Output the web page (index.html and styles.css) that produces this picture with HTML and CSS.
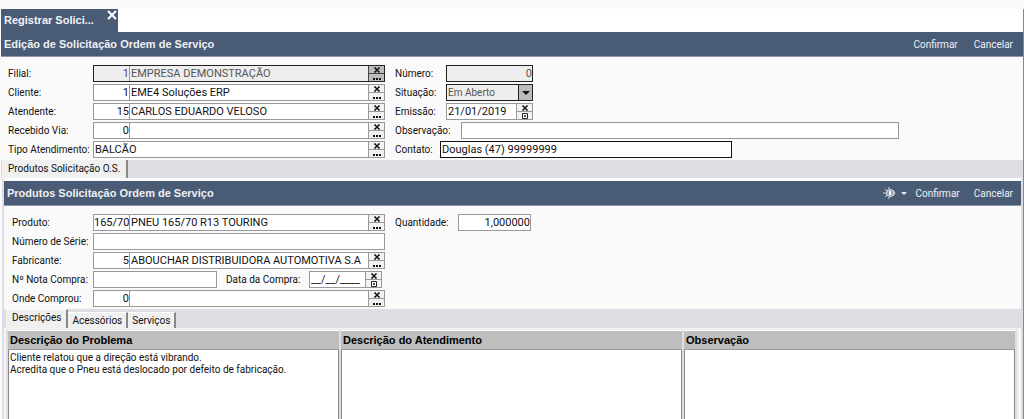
FILE: index.html
```html
<!DOCTYPE html>
<html lang="pt-BR">
<head>
<meta charset="utf-8">
<title>Registrar Solicitação</title>
<link rel="stylesheet" href="styles.css">
</head>
<body>
<svg class="defs" aria-hidden="true">
	<symbol id="x" viewBox="0 0 8 6"><path d="M1 1h2M5 1h2M1 5h2M5 5h2" stroke="#111" stroke-width="1" fill="none"/><path d="M2 1l4 4M6 1l-4 4" stroke="#111" stroke-width="1.500" fill="none"/></symbol>
	<symbol id="dots" viewBox="0 0 8 6"><path d="M0 3h2v2H0zM3 3h2v2H3zM6 3h2v2H6z" fill="#111"/></symbol>
	<symbol id="cal" viewBox="0 0 8 6"><path d="M1.500 .5h5v5h-5z" stroke="#222" stroke-width="1" fill="#fff"/><path d="M3 2l2 2M5 2l-2 2" stroke="#222" stroke-width=".8" fill="none"/></symbol>
	<symbol id="down" viewBox="0 0 8 4"><path d="M0 0h8L4 4z" fill="currentColor"/></symbol>
</svg>
<div id="window">
	<div class="pages">
		<div class="page"><strong>Registrar Solici...</strong>
			<button class="close" aria-label="Fechar"><svg width="10" height="10" viewBox="0 0 10 10"><path d="M1 1l8 8M9 1l-8 8" stroke="#fff" stroke-width="2"/></svg></button>
		</div>
	</div>
	<div class="bar">
		<h1>Edição de Solicitação Ordem de Serviço</h1>
		<div class="actions"><button>Confirmar</button><button>Cancelar</button></div>
	</div>
	<form class="form">
		<div class="left">
			<div class="row"><label for="filial">Filial:</label>
				<div class="field off"><input class="code" id="filial" value="1" disabled><input class="name" aria-label="Nome da filial" value="EMPRESA DEMONSTRAÇÃO" disabled>
				<span class="btns"><button type="button" aria-label="Limpar"><svg><use href="#x"/></svg></button><button type="button" aria-label="Buscar"><svg><use href="#dots"/></svg></button></span></div></div>
			<div class="row"><label for="cliente">Cliente:</label>
				<div class="field"><input class="code" id="cliente" value="1"><input class="name" aria-label="Nome do cliente" value="EME4 Soluções ERP">
				<span class="btns"><button type="button" aria-label="Limpar"><svg><use href="#x"/></svg></button><button type="button" aria-label="Buscar"><svg><use href="#dots"/></svg></button></span></div></div>
			<div class="row"><label for="atendente">Atendente:</label>
				<div class="field"><input class="code" id="atendente" value="15"><input class="name" aria-label="Nome do atendente" value="CARLOS EDUARDO VELOSO">
				<span class="btns"><button type="button" aria-label="Limpar"><svg><use href="#x"/></svg></button><button type="button" aria-label="Buscar"><svg><use href="#dots"/></svg></button></span></div></div>
			<div class="row"><label for="via">Recebido Via:</label>
				<div class="field"><input class="code" id="via" value="0"><input class="name" aria-label="Nome da via">
				<span class="btns"><button type="button" aria-label="Limpar"><svg><use href="#x"/></svg></button><button type="button" aria-label="Buscar"><svg><use href="#dots"/></svg></button></span></div></div>
			<div class="row"><label for="tipo">Tipo Atendimento:</label>
				<div class="field"><input class="name" id="tipo" value="BALCÃO">
				<span class="btns"><button type="button" aria-label="Limpar"><svg><use href="#x"/></svg></button><button type="button" aria-label="Buscar"><svg><use href="#dots"/></svg></button></span></div></div>
		</div>
		<div class="right">
			<div class="row"><label for="numero">Número:</label><div class="field small off"><input class="num" id="numero" value="0" disabled></div></div>
			<div class="row"><label for="situacao">Situação:</label><div class="field small off combo"><select id="situacao"><option>Em Aberto</option></select><span class="arrow"><svg><use href="#down"/></svg></span></div></div>
			<div class="row"><label for="emissao">Emissão:</label><div class="field small"><input class="name" id="emissao" value="21/01/2019">
				<span class="btns"><button type="button" aria-label="Limpar"><svg><use href="#x"/></svg></button><button type="button" aria-label="Calendário"><svg><use href="#cal"/></svg></button></span></div></div>
			<div class="row"><label class="long" for="obs">Observação:</label><div class="field wide"><input class="name" id="obs"></div></div>
			<div class="row"><label class="short" for="contato">Contato:</label><div class="field focus"><input class="name" id="contato" value="Douglas (47) 99999999"></div></div>
		</div>
	</form>
	<div class="tabs main"><a href="#produtos" class="tab on">Produtos Solicitação O.S.</a></div>
	<div id="produtos">
		<div class="bar">
			<h2>Produtos Solicitação Ordem de Serviço</h2>
			<div class="actions">
				<button class="gear" aria-label="Opções"><svg class="sun" viewBox="0 0 14 12"><path d="M1 6h3M3 2l2 2M3 10l2-2M7 0v2M7 10v2" stroke="#d5dae2" stroke-width="1" fill="none"/><circle cx="8" cy="6" r="3.500" fill="#8d99ab" stroke="#e3e6eb"/><path d="M7 4h2v4H7z" fill="#fff"/><path d="M11 3l2 3-2 3" stroke="#d5dae2" fill="none"/></svg><svg class="caret"><use href="#down"/></svg></button><button>Confirmar</button><button>Cancelar</button>
			</div>
		</div>
		<form class="form">
			<div class="left">
				<div class="row"><label for="produto">Produto:</label>
					<div class="field"><input class="code" id="produto" value="165/70"><input class="name" aria-label="Nome do produto" value="PNEU 165/70 R13 TOURING">
					<span class="btns"><button type="button" aria-label="Limpar"><svg><use href="#x"/></svg></button><button type="button" aria-label="Buscar"><svg><use href="#dots"/></svg></button></span></div></div>
				<div class="row"><label for="serie">Número de Série:</label><div class="field"><input class="name" id="serie"></div></div>
				<div class="row"><label for="fabricante">Fabricante:</label>
					<div class="field"><input class="code" id="fabricante" value="5"><input class="name" aria-label="Nome do fabricante" value="ABOUCHAR DISTRIBUIDORA AUTOMOTIVA S.A">
					<span class="btns"><button type="button" aria-label="Limpar"><svg><use href="#x"/></svg></button><button type="button" aria-label="Buscar"><svg><use href="#dots"/></svg></button></span></div></div>
				<div class="row"><label for="nota">Nº Nota Compra:</label><div class="field nota"><input class="name" id="nota"></div>
					<label class="data" for="data">Data da Compra:</label>
					<div class="field date"><input class="name" id="data" value="__/__/____">
					<span class="btns"><button type="button" aria-label="Limpar"><svg><use href="#x"/></svg></button><button type="button" aria-label="Calendário"><svg><use href="#cal"/></svg></button></span></div></div>
				<div class="row"><label for="onde">Onde Comprou:</label>
					<div class="field"><input class="code" id="onde" value="0"><input class="name" aria-label="Nome do local">
					<span class="btns"><button type="button" aria-label="Limpar"><svg><use href="#x"/></svg></button><button type="button" aria-label="Buscar"><svg><use href="#dots"/></svg></button></span></div></div>
			</div>
			<div class="right">
				<div class="row"><label class="mid" for="qtd">Quantidade:</label><div class="field qtd"><input class="num" id="qtd" value="1,000000"></div></div>
			</div>
		</form>
		<div class="tabs sub"><a href="#descricoes" class="tab on">Descrições</a><a href="#acessorios" class="tab">Acessórios</a><a href="#servicos" class="tab">Serviços</a></div>
		<div id="descricoes">
			<table>
				<tr><th>Descrição do Problema</th><th class="center">Descrição do Atendimento</th><th>Observação</th></tr>
				<tr><td>Cliente relatou que a direção está vibrando.<br>Acredita que o Pneu está deslocado por defeito de fabricação.</td><td></td><td></td></tr>
			</table>
		</div>
	</div>
</div>
</body>
</html>
```
FILE: styles.css
```css
*{
	margin:0;
	padding:0;
	box-sizing:border-box;
}
html,body{
	height:100%;
}
body{
	font:10px/13px Roboto,"Liberation Sans",sans-serif;
	color:#111;
	background:#fafafa;
	overflow:hidden;
	padding-top:9px;
}
button,input,select{
	font:inherit;
	color:inherit;
	border:0;
	background:none;
	border-radius:0;
	outline:0;
}
a{
	color:inherit;
	text-decoration:none;
}
.defs{
	display:none;
}
#window{
	height:100%;
	margin-left:1px;
	border-right:1px solid #888;
	display:flex;
	flex-direction:column;
}
.pages{
	height:23px;
	background:#fff;
	flex:none;
}
.page{
	width:117px;
	height:23px;
	padding-left:3px;
	background:#4a5b75;
	color:#f2f4f7;
	display:flex;
	justify-content:space-between;
	line-height:23px;
}
.page strong,.bar h1,.bar h2,th{
	font-family:"Liberation Sans",Arial,sans-serif;
	font-weight:bold;
	font-size:11px;
}
.close{
	width:13px;
	height:12px;
	line-height:0;
}
.bar{
	height:25px;
	background:#4a5b75;
	border-bottom:1px solid #8c97a8;
	color:#eef0f4;
	display:flex;
	justify-content:space-between;
	align-items:center;
	padding:0 10px 0 3px;
	flex:none;
}
.bar h1,.bar h2{
	line-height:24px;
}
.actions{
	display:flex;
	gap:16px;
	align-items:center;
}
.form{
	display:flex;
	gap:10px;
	padding:8px 0 2px 7px;
	flex:none;
}
.left,.right{
	display:flex;
	flex-direction:column;
	gap:2px;
}
.row{
	display:flex;
	height:17px;
}
.row label{
	width:85px;
	line-height:18px;
	white-space:nowrap;
}
.right label{
	width:51px;
}
.right .long{
	width:66px;
}
.right .mid{
	width:63px;
}
.right .short{
	width:45px;
}
.field{
	width:292px;
	display:flex;
	border:1px solid #999;
	background:#fff;
	font-size:11px;
}
.field input,.field select{
	min-width:0;
	height:15px;
}
.code{
	width:36px;
	flex:none;
	text-align:right;
	border-right:1px solid #999;
}
.name{
	flex:1;
	padding-left:1px;
}
.num{
	width:100%;
	text-align:right;
}
.small{
	width:87px;
}
.wide{
	width:438px;
}
.nota{
	width:124px;
}
.date{
	width:73px;
}
.qtd{
	width:73px;
}
.off{
	background:#eee;
	border-color:#222;
	color:#555;
}
.focus{
	border-color:#111;
}
.btns{
	width:16px;
	border-left:1px solid #999;
	display:grid;
	grid-template-rows:7px 8px;
	background:#f2f2f2;
}
.btns button{
	display:grid;
	place-items:center;
}
.btns button + button{
	border-top:1px solid #999;
}
.btns svg{
	width:8px;
	height:6px;
}
.off .btns{
	background:#bbb;
	border-color:#444;
}
.off .btns button + button{
	border-color:#444;
}
.combo select{
	flex:1;
	appearance:none;
	padding-left:1px;
	font-size:10px;
}
.arrow{
	width:14px;
	background:#bbb;
	border-left:1px solid #222;
	color:#111;
	display:flex;
	align-items:center;
	justify-content:center;
}
.arrow svg{
	width:8px;
	height:4px;
}
.caret{
	width:6px;
	height:3px;
}
.tabs{
	background:#dedde3;
	display:flex;
	flex:none;
}
.tab{
	background:#f0f0f0;
	border-right:2px solid #888;
	white-space:nowrap;
}
.main{
	height:18px;
}
.main .tab{
	padding:0 6px;
	line-height:18px;
	margin-left:1px;
}
#produtos{
	flex:1;
	min-height:0;
	margin-left:1px;
	border:2px solid #dedde3;
	border-top:1px solid #fff;
	border-bottom:0;
	display:flex;
	flex-direction:column;
}
#produtos > .bar{
	margin-top:2px;
	padding-right:8px;
}
#produtos .form{
	padding-left:8px;
}
#produtos .left label{
	width:81px;
}
#produtos .left .data{
	width:92px;
	padding-left:9px;
}
#produtos .actions{
	gap:14px;
}
.gear{
	display:flex;
	align-items:center;
	gap:5px;
	margin-right:-6px;
}
.sun{
	width:14px;
	height:12px;
}
.sub{
	height:19px;
	padding-left:2px;
	align-items:flex-end;
}
.sub .tab{
	height:16px;
	padding:0 4px;
	line-height:16px;
	border-top:1px solid #fff;
}
.sub .on{
	height:19px;
	padding:0 5px 0 6px;
}
#descricoes{
	flex:1;
	min-height:0;
	border:2px solid #f0f0f0;
	border-width:2px 2px 0 1px;
	margin:0 2px 0 1px;
	display:flex;
	background:#dedde3;
}
table{
	width:100%;
	height:100%;
	table-layout:fixed;
	border-collapse:separate;
	border-spacing:2px 0;
}
th{
	height:20px;
	background:#bebebe;
	border-top:1px solid #fff;
	border-bottom:1px solid #999;
	color:#000;
	text-align:left;
	padding-left:2px;
}
.center{
	width:34%;
}
td{
	background:#fff;
	border:1px solid #888;
	border-width:0 1px;
	padding:2px 1px;
	vertical-align:top;
	line-height:12px;
}
```
